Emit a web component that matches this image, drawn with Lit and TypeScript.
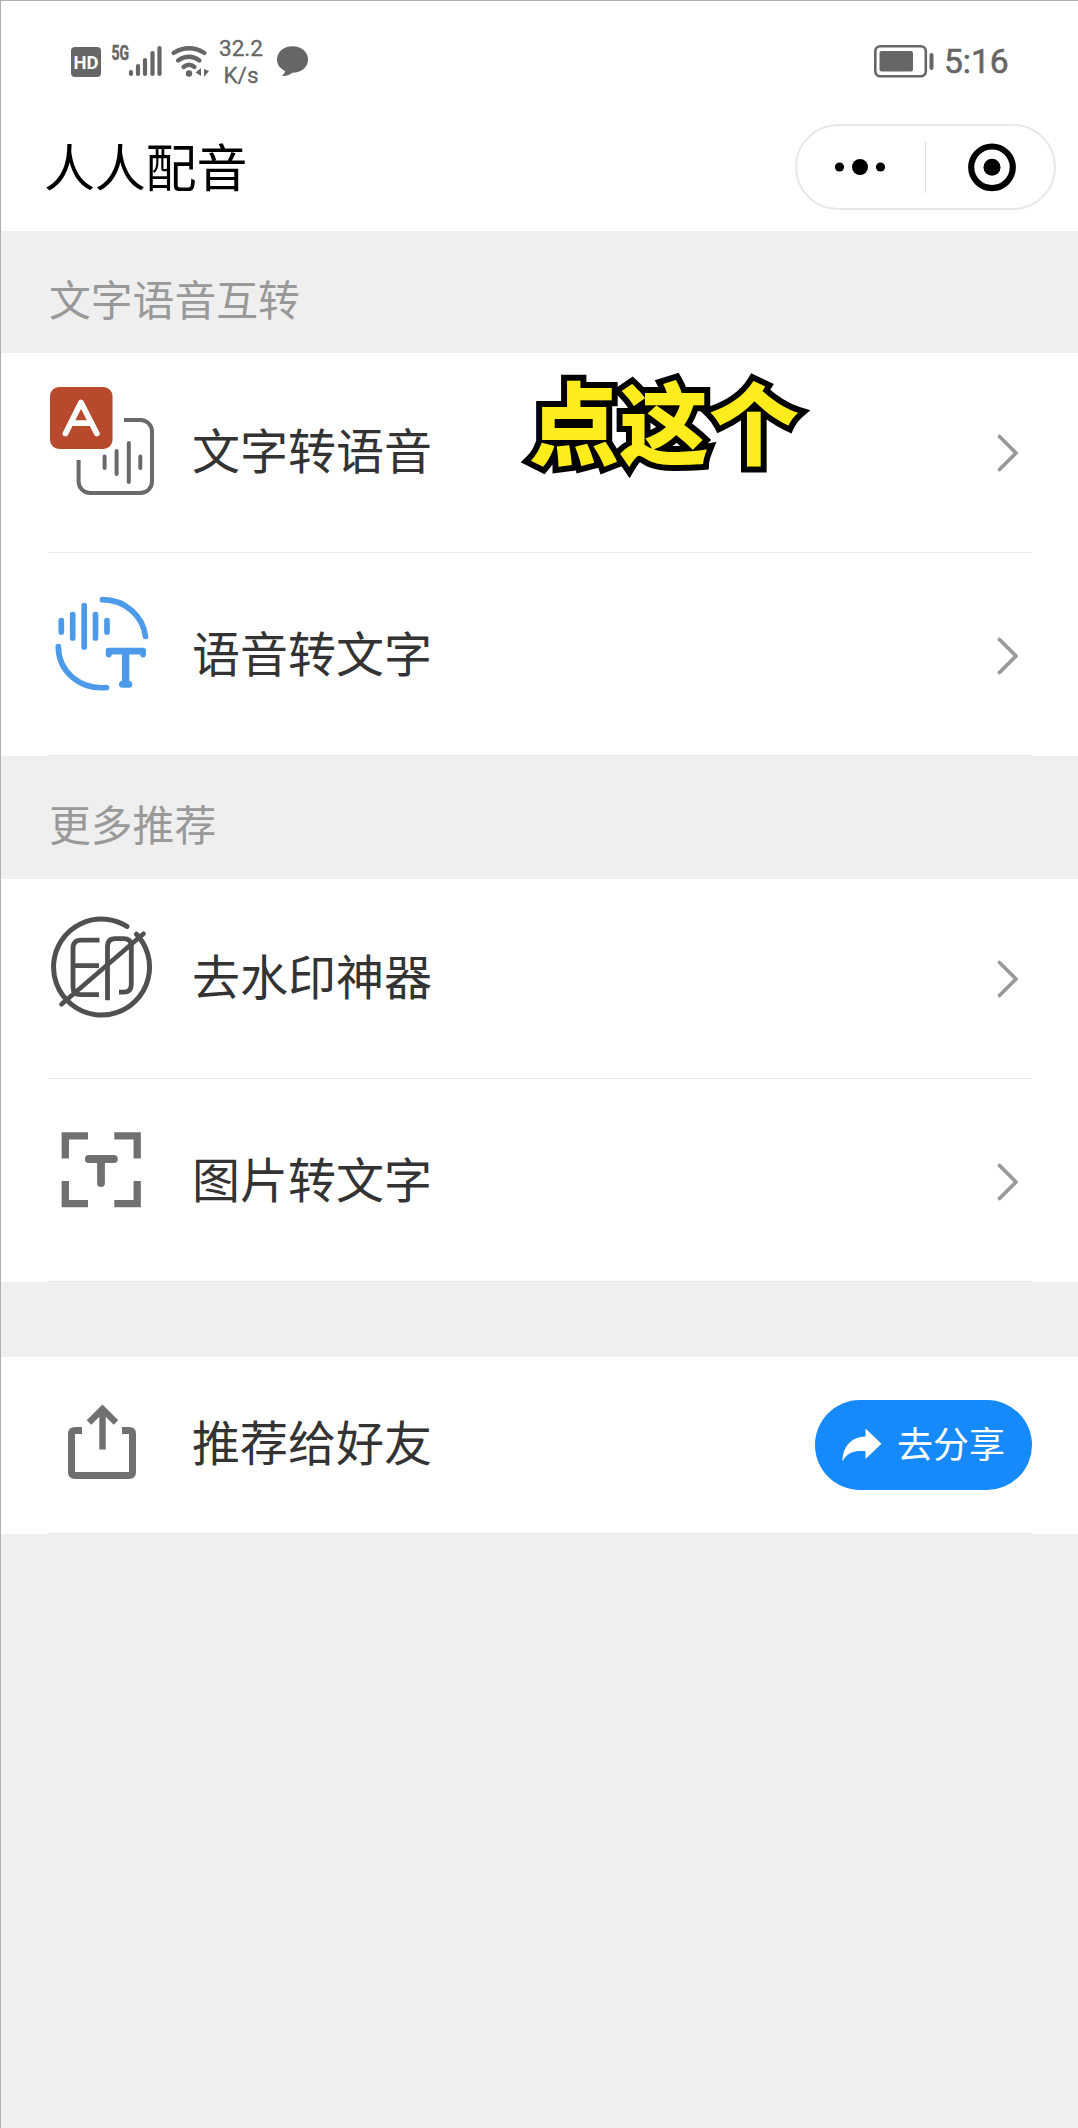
import { LitElement, html, css, nothing } from "lit";
import type { TemplateResult } from "lit";
import { customElement, property } from "lit/decorators.js";

const icons: Record<string, TemplateResult> = {
  textToVoice: html`<svg viewBox="0 0 108 112" width="108" height="112">
    <rect x="2" y="2" width="62.5" height="62" rx="9" fill="#b9492c" />
    <path d="M17.5 48.5 L33 17.5 L48.8 48.5 M23 38.2 H43.5" fill="none" stroke="#fff" stroke-width="5.8" stroke-linecap="round" stroke-linejoin="round" />
    <path d="M76 35 H92.5 A11.5 11.5 0 0 1 104 46.500 V96.500 A11.5 11.5 0 0 1 92.500 108 H42 A11.5 11.5 0 0 1 30.600 96.500 V75" fill="none" stroke="#6a6a6a" stroke-width="4" />
    <path d="M56.600 71.500 V83 M68.600 66 V89 M80.800 58 V97 M92.300 71.500 V83" fill="none" stroke="#6a6a6a" stroke-width="4" stroke-linecap="round" />
  </svg>`,
  voiceToText: html`<svg viewBox="0 0 108 112" width="108" height="112">
    <g fill="none" stroke="#4d9aea" stroke-linecap="round" stroke-linejoin="round" stroke-width="5.7">
      <path d="M54.500 11.700 C77 11.700 95 28 97.500 48.500" />
      <path d="M10.300 58.500 C10.500 83 31 102 58.500 99.500" />
      <path d="M13.300 32.500 V44 M24.700 26.500 V50 M36.200 17.500 V59 M47.500 26.500 V50 M59 32.500 V44" />
    </g>
    <path d="M60 59.800 H95 Q98 59.800 98 63 V67 Q97.500 69.600 95 69.500 Q92.400 69.500 92 66.500 H81.300 V92.700 Q84.300 93.500 84.300 96.500 Q84.300 99.700 81 99.700 H74.300 Q71 99.700 71 96.500 Q71 93.500 74 92.700 V66.500 H63.800 Q63.400 69.500 61 69.500 Q58 69.500 57.800 66.500 V62 Q57.800 59.800 60 59.800 Z" fill="#4d9aea" />
  </svg>`,
  watermark: html`<svg viewBox="0 0.8 108 112" width="108" height="112">
    <g fill="none" stroke="#505050" stroke-linecap="round" stroke-width="5">
      <path d="M79.000 16.200 A48 48 0 1 0 88.500 24" />
      <path d="M13.500 94 L95.500 23.500" stroke-width="4.6" />
    </g>
    <path d="M51.500 30 H33 Q25 30 25 38 V77 Q25 84.500 33 84.500 H51 M25 55.500 H51 M59.500 90 V37 Q59.500 28.500 67 28.500 H75.500 Q83.300 28.500 83.300 36 V74 Q83.300 82 75.500 82 H71" fill="none" stroke="#505050" stroke-width="4.800" />
  </svg>`,
  imageToText: html`<svg viewBox="0 -6 108 112" width="108" height="112">
    <path d="M40 15.900 H17.300 V38.600 M66.300 15.900 H89.200 V38.600 M17.300 61 V83.700 H40 M89.200 61 V83.700 H66.300" fill="none" stroke="#707070" stroke-width="7.300" />
    <path d="M40.800 39 H65.900 M53 39 V63" fill="none" stroke="#707070" stroke-width="7.800" stroke-linecap="round" />
  </svg>`,
  share: html`<svg viewBox="0 -11 108 112" width="108" height="112">
    <path d="M34 42.600 H27 Q23.500 42.600 23.500 46 V84 Q23.500 87.500 27 87.500 H81 Q84.500 87.500 84.500 84 V46 Q84.500 42.600 81 42.600 H74" fill="none" stroke="#707070" stroke-width="7" />
    <path d="M54.500 61.500 V24 M41 34.500 L54.500 21 L68 34.500" fill="none" stroke="#707070" stroke-width="6.400" />
  </svg>`,
};

@customElement("status-bar")
export class StatusBar extends LitElement {
  static styles = css`
    :host {
      display: flex;
      align-items: flex-start;
      height: 123px;
      padding: 32px 69px 0 69px;
      box-sizing: border-box;
      font-family: Roboto, sans-serif;
      color: #666;
    }
    svg { display: block; flex: none; }
    .rate {
      width: 50px;
      margin: 2px 10px 0 6px;
      font-size: 22.6px;
      line-height: 27px;
      font-weight: 400;
      text-align: center;
      -webkit-text-stroke: 0.3px #666;
    }
    .bubble { margin-top: 12px; }
    .spacer { flex: 1; }
    .battery { margin-top: 11px; }
    .clock {
      margin: 9px 0 0 10px;
      font-size: 33.6px;
      line-height: 40px;
      font-weight: 400;
      -webkit-text-stroke: 0.6px #666;
      width: 65px;
      white-space: nowrap;
    }
    .hd { font: 700 19px Roboto, sans-serif; }
    .net { font: 700 19.5px Roboto, sans-serif; stroke: #666; stroke-width: 0.5px; }
  `;

  render() {
    return html`
      <svg class="signals" width="140" height="56" viewBox="70 33 140 56">
        <rect x="71" y="47" width="30" height="30" rx="4" fill="#666" />
        <text class="hd" x="73.500" y="68.700" fill="#fff" textLength="25" lengthAdjust="spacingAndGlyphs">HD</text>
        <text class="net" x="111.500" y="59.700" fill="#666" textLength="17.500" lengthAdjust="spacingAndGlyphs">5G</text>
        <g stroke="#666" stroke-width="4.200" stroke-linecap="round">
          <path d="M131 72 V74 M138 66 V74 M145 60 V74 M152.500 53 V74 M159.500 48 V74" />
        </g>
        <g fill="none" stroke="#666" stroke-width="4.200" stroke-linecap="round">
          <path d="M173.500 53 Q189 43.500 204.500 53 M178 60.500 Q189 53 199.500 60.500 M183.500 67 Q189 62.500 194.500 67" />
        </g>
        <circle cx="189" cy="73.500" r="3.200" fill="#666" />
        <path d="M201 68 V76 L195.500 72.500 Z M204 69 V77 L209 71 Z" fill="#666" />
      </svg>
      <div class="rate">32.2<br />K/s</div>
      <svg class="bubble" width="32" height="32" viewBox="276 45 32 32">
        <path d="M292.500 46.300 C301.500 46.300 308 52 308 59.500 C308 67 301.500 72.800 292.500 72.800 C289 75.500 285.500 76.300 282 76 C284 74 285 72.500 285 71 C280 68.500 277 64.500 277 59.500 C277 52 283.500 46.300 292.500 46.300 Z" fill="#666" />
      </svg>
      <div class="spacer"></div>
      <svg class="battery" width="61" height="34" viewBox="873 44 61 34">
        <rect x="875.300" y="46.300" width="50.500" height="30" rx="5" fill="none" stroke="#666" stroke-width="2.600" />
        <rect x="879.500" y="51" width="33.500" height="20.500" rx="2" fill="#666" />
        <rect x="929.500" y="53" width="4" height="17" rx="2" fill="#666" />
      </svg>
      <div class="clock">5:16</div>
    `;
  }
}

@customElement("title-bar")
export class TitleBar extends LitElement {
  static styles = css`
    :host {
      display: flex;
      justify-content: space-between;
      align-items: flex-start;
      height: 107px;
      box-sizing: border-box;
      padding: 0 22px 0 43px;
    }
    .title {
      margin: 4px 0 0;
      font-size: 51px;
      line-height: 74px;
      font-weight: 400;
      color: #000;
      letter-spacing: -0.2px;
    }
    .capsule {
      display: flex;
      align-items: center;
      width: 261px;
      height: 86px;
      box-sizing: border-box;
      border: 2px solid #e8e8e8;
      border-radius: 43px;
    }
    .half { flex: 1; display: flex; justify-content: center; }
    .sep { width: 1px; height: 51px; background: #ddd; }
    svg { display: block; }
  `;

  render() {
    return html`
      <h1 class="title">人人配音</h1>
      <div class="capsule">
        <div class="half">
          <svg width="54" height="18" viewBox="0 0 54 18">
            <circle cx="5.500" cy="9" r="4.600" /><circle cx="26" cy="9" r="8" /><circle cx="46.500" cy="9" r="4.600" />
          </svg>
        </div>
        <div class="sep"></div>
        <div class="half">
          <svg width="54" height="50" viewBox="0 0 54 50">
            <circle cx="29" cy="25.300" r="20.800" fill="none" stroke="#000" stroke-width="6.200" />
            <circle cx="29" cy="25.300" r="8.500" />
          </svg>
        </div>
      </div>
    `;
  }
}

@customElement("menu-row")
export class MenuRow extends LitElement {
  @property() icon = "";
  @property() label = "";
  @property() note = "";
  @property() action = "";

  static styles = css`
    :host {
      display: flex;
      align-items: center;
      position: relative;
      box-sizing: border-box;
      margin-left: 47px;
      margin-right: 46px;
      border-bottom: 1px solid #e9e9eb;
    }
    svg { display: block; flex: none; }
    .icon { width: 108px; height: 112px; padding-bottom: 24px; }
    .label {
      flex: 1;
      margin-left: 36px;
      padding-bottom: 10px;
      font-size: 48px;
      line-height: 70px;
      color: #333;
      white-space: nowrap;
    }
    .chevron { margin-right: 12px; }
    .note {
      position: absolute;
      left: 481px;
      top: 0;
      font-size: 90px;
      line-height: 132px;
      font-weight: 900;
      color: #ffec1c;
      -webkit-text-stroke: 12px #000;
      paint-order: stroke fill;
      white-space: nowrap;
    }
    .action {
      display: flex;
      align-items: center;
      justify-content: center;
      gap: 15px;
      width: 217px;
      height: 90px;
      padding: 0;
      border: 0;
      border-radius: 45px;
      background: #1689fb;
      color: #fff;
      font: inherit;
      font-size: 36px;
      line-height: 50px;
    }
    .action span { padding-bottom: 6px; }
  `;

  render() {
    return html`
      <div class="icon">${icons[this.icon]}</div>
      <div class="label">${this.label}</div>
      ${this.action
        ? html`<button class="action">
            <svg width="40" height="34" viewBox="0 0 40 34">
              <path d="M0.500 33.500 C0.500 19 9 9 23.500 8.500 V0.500 L39.500 15.800 L23.500 31 V23.200 C12 22.500 5 24.500 0.500 33.500 Z" fill="#fff" />
            </svg>
            <span>${this.action}</span>
          </button>`
        : html`<svg class="chevron" width="24" height="40" viewBox="0 0 24 40">
            <path d="M3.500 3.500 L20 20 L3.500 36.500" fill="none" stroke="#999" stroke-width="3.800" stroke-linecap="round" stroke-linejoin="round" />
          </svg>`}
      ${this.note ? html`<div class="note">${this.note}</div>` : nothing}
    `;
  }
}

@customElement("app-root")
export class AppRoot extends LitElement {
  static styles = css`
    :host {
      display: block;
      min-height: 2128px;
      box-sizing: border-box;
      background: #efefef;
      border-left: 1px solid #b0b0b0;
      border-top: 1px solid #b0b0b0;
      font-family: "Noto Sans CJK SC", sans-serif;
    }
    .top, .group { background: #fff; }
    .section {
      display: flex;
      align-items: center;
      height: 122px;
      box-sizing: border-box;
      padding: 11px 0 0 48px;
      margin: 0;
      font-size: 41.800px;
      font-weight: 400;
      line-height: 60px;
      color: #999;
    }
    .section.second { height: 123px; }
    .first-row { height: 200px; }
    .next-row { height: 203px; padding-top: 3px; }
    .gap { height: 75px; }
    .share-row { height: 177px; }
  `;

  render() {
    return html`
      <div class="top">
        <status-bar></status-bar>
        <title-bar></title-bar>
      </div>
      <h2 class="section">文字语音互转</h2>
      <div class="group">
        <menu-row class="first-row" icon="textToVoice" label="文字转语音" note="点这个"></menu-row>
        <menu-row class="next-row" icon="voiceToText" label="语音转文字"></menu-row>
      </div>
      <h2 class="section second">更多推荐</h2>
      <div class="group">
        <menu-row class="first-row" icon="watermark" label="去水印神器"></menu-row>
        <menu-row class="next-row" icon="imageToText" label="图片转文字"></menu-row>
      </div>
      <div class="gap"></div>
      <div class="group">
        <menu-row class="share-row" icon="share" label="推荐给好友" action="去分享"></menu-row>
      </div>
    `;
  }
}
